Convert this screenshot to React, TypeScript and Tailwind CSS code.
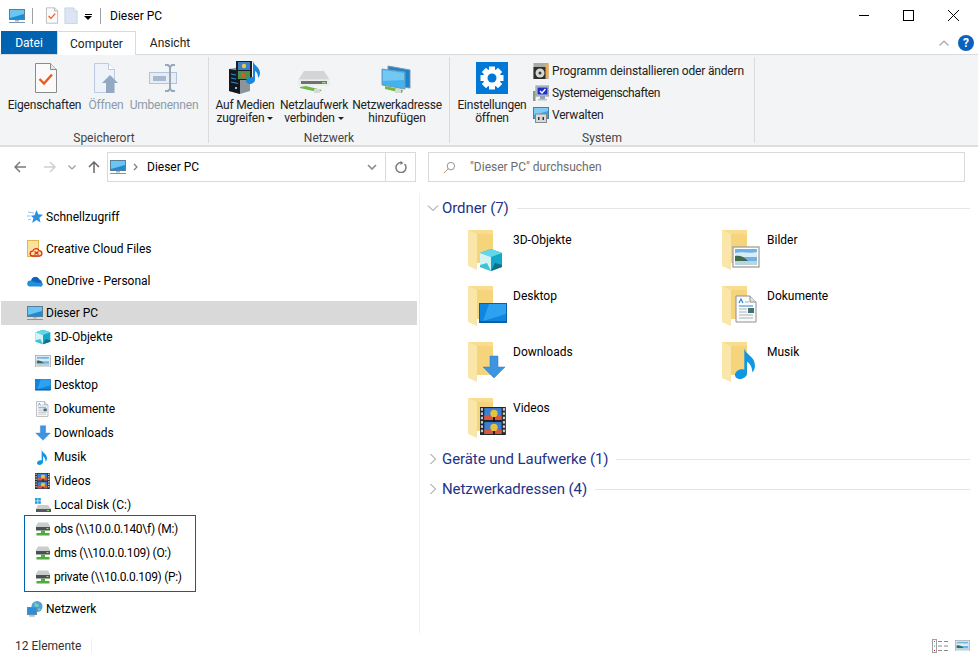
import type { ReactNode } from 'react';

type IconProps = { size?: number; className?: string };

function PcIcon({ size = 16, className = '' }: IconProps) {
  return (
    <svg viewBox="0 0 16 16" width={size} height={size} className={className}>
      <rect x="0.5" y="1.5" width="15" height="10" fill="#1d8ad6" stroke="#5a7f99" />
      <path d="M1 2h14v4L1 10z" fill="#6cc4f2" />
      <rect x="6" y="12" width="4" height="1.5" fill="#a9b7c2" />
      <rect x="0" y="14" width="16" height="1" fill="#7d95a8" />
    </svg>
  );
}

function PropsIcon({ size = 32 }: IconProps) {
  return (
    <svg viewBox="0 0 32 32" width={size} height={size}>
      <path d="M6.5 1.5h15l6 6v23h-21z" fill="#fafafa" stroke="#8b8b8b" />
      <path d="M21.5 1.5v6h6" fill="#e6e6e6" stroke="#8b8b8b" />
      <path d="M10.5 17l4.5 4.5 8-9" fill="none" stroke="#ef5a1c" strokeWidth="2.4" />
    </svg>
  );
}

function PageIcon({ size = 16 }: IconProps) {
  return (
    <svg viewBox="0 0 16 20" width={size} height={size * 1.25}>
      <path d="M1 1h10l4 4v14H1z" fill="#dbe5f3" stroke="#c5d2e4" />
      <path d="M11 1v4h4" fill="#eef3fa" stroke="#c5d2e4" />
    </svg>
  );
}

function OpenIcon() {
  return (
    <svg viewBox="0 0 32 32" width={32} height={32}>
      <path d="M4.5 1.5h14l6 6v23h-20z" fill="#eef3fa" stroke="#bccbe0" />
      <path d="M18.5 1.5v6h6" fill="#fff" stroke="#bccbe0" />
      <path d="M12 21l8-8 8 8h-4v10h-8V21z" fill="#93a9c3" />
    </svg>
  );
}

function RenameIcon() {
  return (
    <svg viewBox="0 0 32 32" width={32} height={32}>
      <rect x="1.5" y="10.5" width="27" height="11" fill="#e6edf6" stroke="#b4c4d8" />
      <rect x="5" y="14" width="13" height="5" fill="#a9b9cd" />
      <path d="M17 3h3l2 2 2-2h3M22 5v22M17 29h3l2-2 2 2h3" fill="none" stroke="#97a7ba" strokeWidth="2" />
    </svg>
  );
}

function MediaIcon() {
  return (
    <svg viewBox="0 0 34 34" width={34} height={34}>
      {/* server box */}
      <path d="M1 9l11-2 10 3v21l-10 3-11-3z" fill="#8c949c" />
      <path d="M1 9l11 2v23L1 31z" fill="#14171b" />
      <path d="M3 14l7 1.5M3 18l7 1.5M3 22l7 1.5" stroke="#2c8fe0" strokeWidth="1" />
      <rect x="7" y="27" width="2" height="2" fill="#7fc4f0" />
      {/* film strip */}
      <rect x="8" y="1" width="16" height="19" fill="#1b1f24" />
      <rect x="10" y="2" width="12" height="8" fill="#3a80c9" />
      <rect x="10" y="11" width="12" height="8" fill="#4f8f4c" />
      <circle cx="16" cy="6" r="2.2" fill="#e9c84a" />
      <circle cx="15" cy="15" r="2.2" fill="#d8582f" />
      {/* note */}
      <path d="M25 1c1 5 7 6 7 12 0 2-1 4-2 5 0-4-1-6-3-7v9c0 2-3 4-5 4s-4-1-4-3c0-3 4-4 7-4z" fill="#1a86dc" />
    </svg>
  );
}

function DriveIcon() {
  return (
    <svg viewBox="0 0 34 24" width={34} height={24}>
      <path d="M7 1h20l6 9v6H1v-6z" fill="#e4e6e6" />
      <path d="M7 1h20l5 8H2z" fill="#d3d6d5" />
      <path d="M1 10h32v6H1z" fill="#eceeed" />
      <path d="M4 11h26v3H4z" fill="#6d736e" />
      <rect x="25" y="12" width="4" height="1.4" fill="#9ad67a" />
      <path d="M3 17l6-1 16 4-3 2-6-1-13-3z" fill="#71b849" />
      <rect x="17" y="19" width="6" height="4" fill="#d5d8d6" />
    </svg>
  );
}

function NetAddrIcon() {
  return (
    <svg viewBox="0 0 32 30" width={32} height={30}>
      <path d="M7 2l22 4v18L7 20z" fill="#1c82c9" stroke="#7799ad" />
      <path d="M1 5l23 3v17L1 21z" fill="#45b1ee" stroke="#7799ad" />
      <path d="M2 6l21 3v7L2 17z" fill="#70c8f3" />
      <path d="M4 22l18 4-1 3-17-4z" fill="#6dbb47" />
      <rect x="14" y="25" width="6" height="4" fill="#d4d8d8" />
    </svg>
  );
}

function GearIcon() {
  const teeth = [0, 45, 90, 135, 180, 225, 270, 315];
  return (
    <svg viewBox="0 0 32 32" width={32} height={32}>
      <rect width="32" height="32" fill="#0078d7" />
      {teeth.map((a) => (
        <rect key={a} x="13" y="4.5" width="6" height="6" fill="#fff" transform={`rotate(${a} 16 16)`} />
      ))}
      <circle cx="16" cy="16" r="9" fill="#fff" />
      <circle cx="16" cy="16" r="4.5" fill="#0078d7" />
    </svg>
  );
}

function ProgramIcon() {
  return (
    <svg viewBox="0 0 16 16" width={16} height={16}>
      <rect x="0.5" y="0" width="15" height="16" fill="#a7ada6" />
      <rect x="12" y="1" width="3.5" height="14" fill="#f0a94b" />
      <rect x="0.5" y="4" width="12" height="12" fill="#2d2f2e" />
      <circle cx="7" cy="10" r="4.5" fill="#d8d8d0" />
      <circle cx="7" cy="10" r="1.5" fill="#3a3a3a" />
    </svg>
  );
}

function SysPropsIcon() {
  return (
    <svg viewBox="0 0 16 16" width={16} height={16}>
      <rect x="3" y="1" width="13" height="10" fill="#c9d1de" stroke="#8895a8" />
      <rect x="4.5" y="2.5" width="10" height="7" fill="#1f2fc1" />
      <path d="M7 6l2 2 3.5-4" fill="none" stroke="#fff" strokeWidth="1.4" />
      <rect x="7" y="11" width="5" height="3" fill="#9aa3ad" />
      <rect x="0" y="6" width="2.5" height="10" fill="#8d9a7c" />
      <rect x="5" y="14" width="9" height="1.5" fill="#b8c0c8" />
    </svg>
  );
}

function ManageIcon() {
  return (
    <svg viewBox="0 0 16 16" width={16} height={16}>
      <rect x="0.5" y="0.5" width="15" height="11" fill="#35a4ea" stroke="#4a7ea5" />
      <path d="M1 1h14v3L1 8z" fill="#7fcdf5" />
      <rect x="2.5" y="7" width="11" height="8.5" fill="#d9d9d9" stroke="#8a8a8a" />
      <rect x="5" y="10" width="1.5" height="3" fill="#333" />
      <rect x="9.5" y="10" width="1.5" height="3" fill="#333" />
    </svg>
  );
}

function StarIcon() {
  return (
    <svg viewBox="0 0 16 16" width={16} height={16}>
      <path d="M9.5 1l1.8 4.3 4.7.4-3.6 3 1.1 4.9-4-2.6-4.4 3 1.4-5-2.8-2.2 3.8-.6z" fill="#2e8fe0" />
      <path d="M1 3l6 1M0 7h3M1 11l3-1" stroke="#8cc4ef" strokeWidth="1" />
    </svg>
  );
}

function CloudFolderIcon() {
  return (
    <svg viewBox="0 0 16 18" width={16} height={18}>
      <rect x="0.5" y="0.5" width="11" height="16" fill="#fbe29d" stroke="#e2b64e" />
      <path d="M5.5 16a2.4 2.4 0 0 1 .2-4.8 3.4 3.4 0 0 1 6.4-.6 2.8 2.8 0 0 1 1 5.4zM7.5 11.5l4 3M11.5 11.5l-4 3" fill="#fbe29d" stroke="#db2d20" strokeWidth="1.3" />
    </svg>
  );
}

function OneDriveIcon() {
  return (
    <svg viewBox="0 0 16 12" width={16} height={12}>
      <path d="M4 5.5a4.5 4.5 0 0 1 8.5-1A3.5 3.5 0 0 1 15 8H6z" fill="#0f63b8" />
      <path d="M3.5 5.5A3 3 0 0 0 3 11.5h9.5a2.5 2.5 0 0 0 3-3.5L9 7.5z" fill="#1f8fe0" />
    </svg>
  );
}

function CubeIcon({ size = 16 }: IconProps) {
  return (
    <svg viewBox="0 0 24 24" width={size} height={size} className="block">
      <path d="M12 1l11 4v14l-11 4-11-4V5z" fill="#14a7c9" />
      <path d="M12 1l11 4-11 4L1 5z" fill="#62d7e6" />
      <path d="M1 5l11 4v14L1 19z" fill="#d5f3f5" />
      <path d="M1 17l7-2 4 8-11-4z" fill="#3cc3d6" />
      <path d="M23 17l-7-2-4 8 11-4z" fill="#0d6f8a" />
    </svg>
  );
}

function PictureIcon({ size = 16 }: IconProps) {
  return (
    <svg viewBox="0 0 28 22" width={size} height={(size * 22) / 28} className="block">
      <rect x="1" y="1" width="26" height="20" fill="#fff" stroke="#a5a5a5" strokeWidth="1.4" />
      <rect x="3" y="3" width="22" height="16" fill="#6fb2e6" />
      <path d="M3 7c8-2 14 1 22-1v5H3z" fill="#d8ecf8" />
      <path d="M3 10c4-1 9 0 13 5H3z" fill="#3f6a4f" />
      <rect x="3" y="15" width="22" height="4" fill="#b9d5dd" />
    </svg>
  );
}

function DesktopIcon({ size = 16 }: IconProps) {
  return (
    <svg viewBox="0 0 28 20" width={size} height={(size * 20) / 28} className="block">
      <rect x="0.5" y="0.5" width="27" height="19" fill="#0f87e0" stroke="#0b5fa5" />
      <path d="M10 1h17v10L4 18z" fill="#2ea1f0" />
      <rect x="1" y="18" width="26" height="1.4" fill="#0b5fa5" />
    </svg>
  );
}

function DocIcon({ size = 16 }: IconProps) {
  return (
    <svg viewBox="0 0 22 28" width={(size * 22) / 28} height={size} className="block">
      <path d="M1 1h14l6 6v20H1z" fill="#fbfbfb" stroke="#8f8f8f" />
      <path d="M15 1v6h6" fill="#e5e5e5" stroke="#8f8f8f" />
      <path d="M4 8l2-4 2 4M4 11h14" stroke="#2a86d8" strokeWidth="1.2" fill="none" />
      <path d="M10 7h4M4 14h8M4 17h8M4 20h14M4 23h14" stroke="#a8b2ba" strokeWidth="1.2" />
      <rect x="13" y="13" width="6" height="5" fill="#466f73" />
    </svg>
  );
}

function ArrowIcon({ size = 16 }: IconProps) {
  return (
    <svg viewBox="0 0 24 24" width={size} height={size} className="block">
      <path d="M8 1h8v11h7L12 23 1 12h7z" fill="#3d94e1" stroke="#2f7dc4" strokeWidth="0.5" />
    </svg>
  );
}

function MusicIcon({ size = 16 }: IconProps) {
  return (
    <svg viewBox="0 0 16 24" width={(size * 16) / 24} height={size} className="block">
      <path d="M7 1c1 5 8 6 8 13 0 2-1 4-2 5 0-4-2-7-4-8v9c0 2-3 4-5 4s-4-1-4-3c0-3 4-5 7-4z" fill="#0f96e4" />
    </svg>
  );
}

function FilmIcon({ size = 16 }: IconProps) {
  const holes = [1, 5, 9, 13, 17, 21];
  return (
    <svg viewBox="0 0 24 26" width={(size * 24) / 26} height={size} className="block">
      <rect width="24" height="26" fill="#23262a" />
      {holes.map((y) => (
        <g key={y}>
          <rect x="0.8" y={y} width="2" height="2.4" fill="#c9c9c9" />
          <rect x="21.2" y={y} width="2" height="2.4" fill="#c9c9c9" />
        </g>
      ))}
      <rect x="4" y="1" width="16" height="11" fill="#3b7fd4" />
      <rect x="4" y="14" width="16" height="11" fill="#3b7fd4" />
      <rect x="4" y="8" width="16" height="4" fill="#d8573c" />
      <rect x="4" y="21" width="16" height="4" fill="#d8573c" />
      <circle cx="13" cy="6" r="3.4" fill="#e7c23c" />
      <circle cx="13" cy="19" r="3.4" fill="#e7c23c" />
      <path d="M13 9.4v4M13 22.4v3" stroke="#111" strokeWidth="1.6" />
    </svg>
  );
}

function LocalDiskIcon() {
  return (
    <svg viewBox="0 0 16 16" width={16} height={16}>
      <rect x="0" y="1" width="2.6" height="2.6" fill="#1aa0e8" />
      <rect x="3.2" y="1" width="2.6" height="2.6" fill="#1aa0e8" />
      <rect x="0" y="4.2" width="2.6" height="2.6" fill="#1aa0e8" />
      <rect x="3.2" y="4.2" width="2.6" height="2.6" fill="#1aa0e8" />
      <path d="M3 8h10l3 4v3H1v-3z" fill="#c9cdce" />
      <rect x="1" y="12" width="15" height="3" fill="#55595a" />
      <rect x="12" y="13" width="2" height="1" fill="#8fd66a" />
    </svg>
  );
}

function NetDriveIcon() {
  return (
    <svg viewBox="0 0 16 16" width={16} height={16}>
      <path d="M3 1.5h10l2 3.5v4H1V5z" fill="#c9cdce" />
      <rect x="1" y="6" width="14" height="3.5" fill="#4c5050" />
      <rect x="11.5" y="7" width="2" height="1" fill="#9ad67a" />
      <rect x="6" y="9.5" width="4" height="3" fill="#4cae3a" />
      <rect x="1.5" y="12" width="13" height="2.5" fill="#4cae3a" />
    </svg>
  );
}

function GlobeIcon() {
  return (
    <svg viewBox="0 0 16 16" width={16} height={16}>
      <circle cx="10" cy="5.5" r="5.5" fill="#4aa3df" />
      <path d="M7 1.5c2 1 4 1 5 3-1 2-3 2-4 1zM11 7l3 1-2 2z" fill="#8dc9a0" />
      <rect x="0.5" y="6.5" width="9" height="7" fill="#2b8ed8" stroke="#5f8aa8" />
      <rect x="3.5" y="13.5" width="3" height="1" fill="#8aa0b2" />
      <rect x="2" y="14.5" width="6" height="1" fill="#8aa0b2" />
    </svg>
  );
}

function BigFolder({ badge, badgePos }: { badge: ReactNode; badgePos: string }) {
  return (
    <div className="relative h-[42px] w-[45px] shrink-0">
      <svg viewBox="0 0 26 40" width={26} height={40} className="block">
        <path d="M0 0h25v33H8z" fill="#f6d47c" />
        <path d="M0 0h25v4H6z" fill="#f9dc90" />
        <path d="M0 0l9 4v36l-9-4z" fill="#fbe6aa" />
      </svg>
      {/* badge sits over the folder corner */}
      <div className={`absolute ${badgePos}`}>{badge}</div>
    </div>
  );
}

function NavRow({ icon, label, nested, active, labelClass = '' }: { icon: ReactNode; label: string; nested?: boolean; active?: boolean; labelClass?: string }) {
  return (
    <div className={`flex h-6 items-center gap-[3px] ${nested ? 'pl-[33px]' : 'pl-[25px]'} ${active ? 'bg-[#d9d9d9]' : ''}`}>
      <div className="flex w-[17px] shrink-0 items-center justify-center">{icon}</div>
      <span className={labelClass}>{label}</span>
    </div>
  );
}

function RibbonButton({ icon, lines, width, disabled, caret }: { icon: ReactNode; lines: string[]; width: string; disabled?: boolean; caret?: boolean }) {
  return (
    <div className={`flex flex-col items-center tracking-[-0.2px] ${width} ${disabled ? 'text-[#8d9aa8]' : 'text-[#222]'}`}>
      <div className="flex h-[38px] items-end pb-[1px]">{icon}</div>
      <div className="mt-[4px] flex flex-col items-center whitespace-nowrap leading-[13px]">
        {lines.map((l, i) => (
          <span key={l} className="flex items-center">
            {l}
            {caret && i === lines.length - 1 && <span className="ml-[3px] h-0 w-0 border-x-[3px] border-t-[3px] border-x-transparent border-t-[#222]" />}
          </span>
        ))}
      </div>
    </div>
  );
}

function RibbonGroup({ label, width, children }: { label: string; width: string; children: ReactNode }) {
  return (
    <div className={`mt-[2px] flex h-[86px] shrink-0 flex-col border-r border-[#dadbdc] ${width}`}>
      <div className="flex h-[71px]">{children}</div>
      <div className="h-[15px] text-center leading-[21px] text-[#444]">{label}</div>
    </div>
  );
}

function SmallAction({ icon, label, labelClass }: { icon: ReactNode; label: string; labelClass: string }) {
  return (
    <div className="flex h-[22px] items-center gap-[3px] whitespace-nowrap text-[#222]">
      {icon}
      <span className={labelClass}>{label}</span>
    </div>
  );
}

function SectionHeader({ label, open }: { label: string; open?: boolean }) {
  return (
    <div className="flex h-[30px] items-center text-[15px] tracking-[-0.08px] text-[#1e3287]">
      <svg viewBox="0 0 12 12" width={12} height={12} className="shrink-0">
        <path d={open ? 'M1 3.5l5 5 5-5' : 'M3.5 1l5 5-5 5'} fill="none" stroke="#8a8a8a" strokeWidth="1" />
      </svg>
      <span className="ml-[3px] whitespace-nowrap">{label}</span>
      <div className="ml-[8px] mr-[8px] h-px flex-1 bg-[#e5e5e5]" />
    </div>
  );
}

function Tile({ label, badge, badgePos }: { label: string; badge: ReactNode; badgePos: string }) {
  return (
    <div className="flex items-start">
      <BigFolder badge={badge} badgePos={badgePos} />
      <span className="pt-[1px] leading-[18px] text-black">{label}</span>
    </div>
  );
}

export default function App() {
  return (
    <div className="flex h-[658px] w-[978px] flex-col overflow-hidden bg-white text-[12px] text-black [font-family:Roboto,sans-serif]">
      {/* Title bar */}
      <div className="flex h-[31px] shrink-0 items-center pl-[9px]">
        <PcIcon />
        <div className="ml-[7px] h-[16px] w-px bg-[#a0a0a0]" />
        <div className="ml-[10px] flex items-center">
          <PropsIcon size={17} />
        </div>
        <div className="ml-[4px] flex items-center">
          <PageIcon size={14} />
        </div>
        <div className="ml-[6px] flex flex-col items-center gap-[1px] pt-[3px]">
          <div className="h-px w-[7px] bg-black" />
          <div className="h-0 w-0 border-x-[4px] border-t-[4px] border-x-transparent border-t-black" />
        </div>
        <div className="ml-[8px] h-[16px] w-px bg-[#a0a0a0]" />
        <span className="ml-[9px]">Dieser PC</span>
        <div className="ml-auto flex">
          <div className="flex w-[45px] items-center justify-center">
            <div className="h-px w-[10px] bg-black" />
          </div>
          <div className="flex w-[45px] items-center justify-center">
            <div className="h-[11px] w-[11px] border border-black" />
          </div>
          <div className="mr-[2px] flex w-[45px] items-center justify-center">
            <svg viewBox="0 0 10 10" width={11} height={11}>
              <path d="M0 0l10 10M10 0L0 10" stroke="#000" strokeWidth="0.9" />
            </svg>
          </div>
        </div>
      </div>

      {/* Tabs */}
      <div className="flex h-[24px] shrink-0 items-stretch border-b border-[#dadbdc] pl-px">
        <div className="flex w-[56px] items-center justify-center bg-[#0063b1] text-white">Datei</div>
        <div className="z-10 -mb-px flex w-[79px] items-center justify-center border-x border-t border-[#dadbdc] bg-white text-[#222]">Computer</div>
        <div className="flex w-[68px] items-center justify-center text-[#222]">Ansicht</div>
        <div className="ml-auto flex items-center gap-[9px] pr-[4px]">
          <svg viewBox="0 0 10 6" width={10} height={6}>
            <path d="M.5 5.5L5 1l4.5 4.5" fill="none" stroke="#a5a5a5" strokeWidth="1.2" />
          </svg>
          <div className="flex h-[16px] w-[16px] items-center justify-center rounded-full bg-[#0a62bd] text-[12px] font-bold text-white">?</div>
        </div>
      </div>

      {/* Ribbon */}
      <div className="flex h-[92px] shrink-0 border-b-2 border-[#dfdfdf] bg-[#f3f4f6]">
        <RibbonGroup label="Speicherort" width="w-[209px]">
          <div className="flex pl-[7px]">
            <RibbonButton icon={<PropsIcon />} lines={['Eigenschaften']} width="w-[75px]" />
            <RibbonButton icon={<OpenIcon />} lines={['Öffnen']} width="w-[48px]" disabled />
            <RibbonButton icon={<RenameIcon />} lines={['Umbenennen']} width="w-[68px]" disabled />
          </div>
        </RibbonGroup>
        <RibbonGroup label="Netzwerk" width="w-[241px]">
          <div className="flex pl-[2px]">
            <RibbonButton icon={<MediaIcon />} lines={['Auf Medien', 'zugreifen']} width="w-[68px]" caret />
            <RibbonButton icon={<DriveIcon />} lines={['Netzlaufwerk', 'verbinden']} width="w-[70px]" caret />
            <RibbonButton icon={<NetAddrIcon />} lines={['Netzwerkadresse', 'hinzufügen']} width="w-[96px]" />
          </div>
        </RibbonGroup>
        <RibbonGroup label="System" width="w-[305px]">
          <div className="flex pl-[2px]">
            <RibbonButton icon={<GearIcon />} lines={['Einstellungen', 'öffnen']} width="w-[80px]" />
            <div className="ml-px flex flex-col pt-[3px]">
              <SmallAction icon={<ProgramIcon />} label="Programm deinstallieren oder ändern" labelClass="tracking-[-0.17px]" />
              <SmallAction icon={<SysPropsIcon />} label="Systemeigenschaften" labelClass="tracking-[-0.4px]" />
              <SmallAction icon={<ManageIcon />} label="Verwalten" labelClass="tracking-[-0.2px]" />
            </div>
          </div>
        </RibbonGroup>
      </div>

      {/* Address bar */}
      <div className="flex h-[46px] shrink-0 items-start pt-[5px]">
        <div className="flex h-[30px] w-[107px] shrink-0 items-center pl-[14px]">
          <svg viewBox="0 0 12 12" width={12} height={12}>
            <path d="M12 6H1M6 1L1 6l5 5" fill="none" stroke="#7a7a7a" strokeWidth="1.5" />
          </svg>
          <svg viewBox="0 0 12 12" width={12} height={12} className="ml-[18px]">
            <path d="M0 6h11M6 1l5 5-5 5" fill="none" stroke="#d0d0d0" strokeWidth="1.5" />
          </svg>
          <svg viewBox="0 0 8 5" width={8} height={5} className="ml-[12px]">
            <path d="M.5.5L4 4 7.5.5" fill="none" stroke="#9a9a9a" strokeWidth="1.2" />
          </svg>
          <svg viewBox="0 0 12 12" width={12} height={12} className="ml-[12px]">
            <path d="M6 12V1M1 6l5-5 5 5" fill="none" stroke="#6a6a6a" strokeWidth="1.5" />
          </svg>
        </div>
        <div className="flex h-[30px] w-[309px] items-center border border-[#d9d9d9]">
          <div className="ml-[2px] flex items-center">
            <PcIcon size={16} />
          </div>
          <svg viewBox="0 0 6 8" width={6} height={8} className="ml-[7px]">
            <path d="M1 1l3 3-3 3" fill="none" stroke="#7a7a7a" strokeWidth="1.2" />
          </svg>
          <span className="ml-[8px]">Dieser PC</span>
          <svg viewBox="0 0 10 6" width={10} height={6} className="ml-auto mr-[8px]">
            <path d="M1 1l4 4 4-4" fill="none" stroke="#8a8a8a" strokeWidth="1.6" />
          </svg>
          <div className="flex h-full w-[30px] items-center justify-center border-l border-[#d9d9d9]">
            <svg viewBox="0 0 12 12" width={12} height={12}>
              <path d="M9.5 3a5 5 0 1 1-3-1.4" fill="none" stroke="#7a7a7a" strokeWidth="1.5" />
              <path d="M5.5 0v4l3-2z" fill="#7a7a7a" />
            </svg>
          </div>
        </div>
        <div className="ml-[12px] flex h-[30px] w-[537px] items-center border border-[#d9d9d9] pl-[14px] text-[#6d6d6d]">
          <svg viewBox="0 0 14 14" width={13} height={13}>
            <circle cx="8.5" cy="5.5" r="4" fill="none" stroke="#8a8a8a" />
            <path d="M5.5 8.5L1 13" stroke="#b08a6a" />
          </svg>
          <span className="ml-[14px]">"Dieser PC" durchsuchen</span>
        </div>
      </div>

      <div className="flex min-h-0 flex-1">
        {/* Navigation pane */}
        <div className="flex h-full w-[420px] shrink-0 flex-col border-r border-[#f0f0f0] pl-px pr-[2px] pt-[12px]">
          <NavRow icon={<StarIcon />} label="Schnellzugriff" />
          <div className="mt-[8px]"><NavRow icon={<CloudFolderIcon />} label="Creative Cloud Files" /></div>
          <div className="mt-[8px]"><NavRow icon={<OneDriveIcon />} label="OneDrive - Personal" /></div>
          <div className="mt-[8px]"><NavRow icon={<PcIcon />} label="Dieser PC" active /></div>
          <NavRow nested icon={<CubeIcon />} label="3D-Objekte" />
          <NavRow nested icon={<PictureIcon />} label="Bilder" />
          <NavRow nested icon={<DesktopIcon />} label="Desktop" />
          <NavRow nested icon={<DocIcon />} label="Dokumente" />
          <NavRow nested icon={<ArrowIcon />} label="Downloads" />
          <NavRow nested icon={<MusicIcon />} label="Musik" />
          <NavRow nested icon={<FilmIcon />} label="Videos" />
          <NavRow nested icon={<LocalDiskIcon />} label="Local Disk (C:)" />
          <div className="relative z-10 -mb-[3px] -mt-[2px] ml-[23px] w-[172px] border border-[#0063b1] pb-[2px] pt-px [&>div]:pl-[9px]">
            <NavRow icon={<NetDriveIcon />} label="obs (\\10.0.0.140\f) (M:)" labelClass="tracking-[-0.3px]" />
            <NavRow icon={<NetDriveIcon />} label="dms (\\10.0.0.109) (O:)" labelClass="tracking-[-0.3px]" />
            <NavRow icon={<NetDriveIcon />} label="private (\\10.0.0.109) (P:)" labelClass="tracking-[-0.3px]" />
          </div>
          <div className="mt-[8px]"><NavRow icon={<GlobeIcon />} label="Netzwerk" /></div>
        </div>

        {/* Content pane */}
        <div className="min-w-0 flex-1 pl-[7px]">
          <SectionHeader label="Ordner (7)" open />
          <div className="grid grid-cols-[254px_254px] grid-rows-[56px_56px_56px_46px] pl-[41px] pt-[7px]">
            <Tile label="3D-Objekte" badge={<CubeIcon size={24} />} badgePos="left-[11px] top-[18px]" />
            <Tile label="Bilder" badge={<PictureIcon size={28} />} badgePos="left-[10px] top-[16px]" />
            <Tile label="Desktop" badge={<DesktopIcon size={28} />} badgePos="left-[11px] top-[17px]" />
            <Tile label="Dokumente" badge={<DocIcon size={28} />} badgePos="left-[13px] top-[9px]" />
            <Tile label="Downloads" badge={<ArrowIcon size={24} />} badgePos="left-[14px] top-[13px]" />
            <Tile label="Musik" badge={<MusicIcon size={32} />} badgePos="left-[13px] top-[5px]" />
            <Tile label="Videos" badge={<FilmIcon size={28} />} badgePos="left-[12px] top-[9px]" />
          </div>
          <SectionHeader label="Geräte und Laufwerke (1)" />
          <SectionHeader label="Netzwerkadressen (4)" />
        </div>
      </div>

      {/* Status bar */}
      <div className="flex h-[25px] shrink-0 items-center pl-[15px] pr-[8px] text-[#333]">
        <span>12 Elemente</span>
        <div className="ml-[10px] h-[14px] w-px bg-[#f0f0f0]" />
        <div className="ml-auto flex items-center gap-[7px]">
          <svg viewBox="0 0 16 14" width={16} height={14}>
            <rect x=".5" y=".5" width="4" height="13" fill="#fff" stroke="#a0a0a0" />
            <rect x="2" y="2" width="1" height="1" fill="#3a8a6a" />
            <rect x="2" y="6.5" width="1" height="1" fill="#2e8fe0" />
            <rect x="2" y="11" width="1" height="1" fill="#e02020" />
            <path d="M6 2.5h4M12 2.5h4M6 7h4M12 7h4M6 11.5h4M12 11.5h4" stroke="#8a8a8a" />
          </svg>
          <PictureIcon size={15} />
        </div>
      </div>
    </div>
  );
}
